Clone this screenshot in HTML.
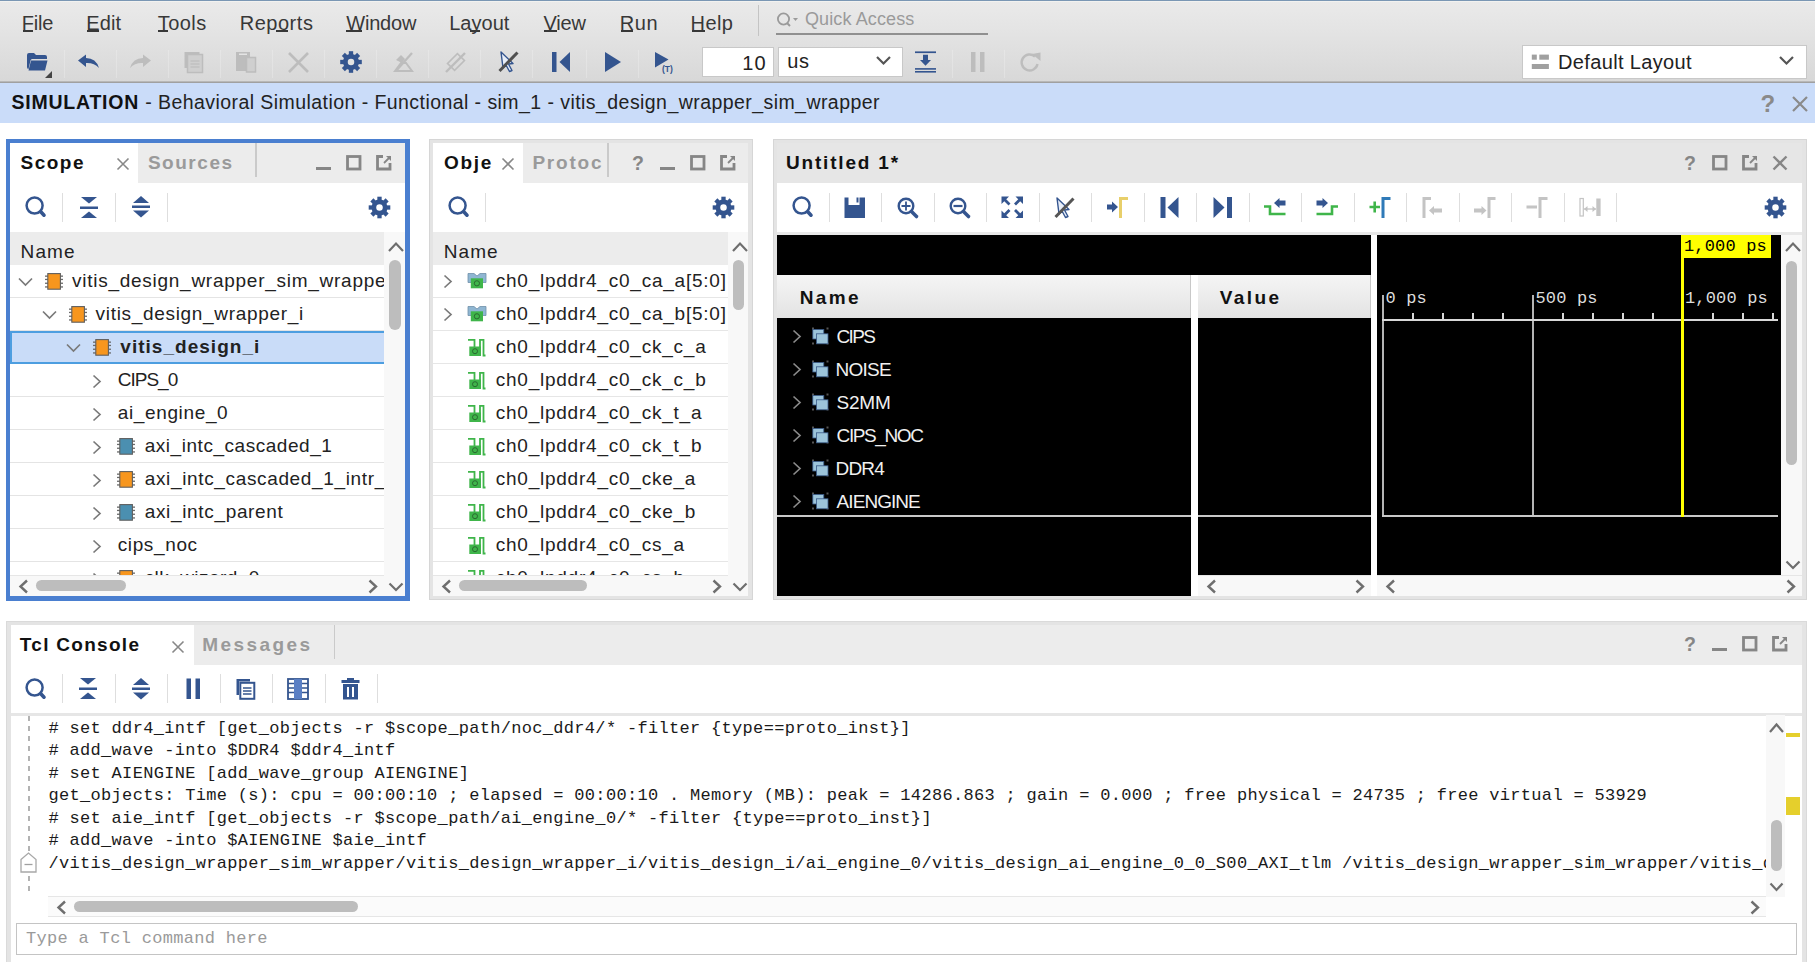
<!DOCTYPE html><html><head><meta charset="utf-8"><style>
html,body{margin:0;padding:0;}
body{width:1815px;height:962px;overflow:hidden;position:relative;background:#fff;font-family:"Liberation Sans",sans-serif;}
.a{position:absolute;}
.t{white-space:nowrap;}
svg{display:block;overflow:visible;}
</style></head><body>
<div class="a" style="left:0px;top:0px;width:1815px;height:82px;background:linear-gradient(#eaeaea 0px,#e4e4e4 30px,#d8d8d8 81px);"></div>
<div class="a" style="left:0px;top:0px;width:1815px;height:1px;background:#7a97b4;"></div>
<div class="a" style="left:0px;top:1px;width:1815px;height:1px;background:#f2f2f0;"></div>
<div class="a" style="left:0px;top:80.5px;width:1815px;height:1px;background:#b8b8b8;"></div>
<div class="a" style="left:0px;top:81.5px;width:1815px;height:1.5px;background:#a0a0a0;"></div>
<div class="a t" style="left:21.80px;top:12.87px;font-size:20px;line-height:20px;color:#383838;font-weight:normal;letter-spacing:-0.235px;font-family:'Liberation Sans', sans-serif;">File</div>
<div class="a t" style="left:86.30px;top:12.87px;font-size:20px;line-height:20px;color:#383838;font-weight:normal;letter-spacing:0.065px;font-family:'Liberation Sans', sans-serif;">Edit</div>
<div class="a t" style="left:157.70px;top:12.87px;font-size:20px;line-height:20px;color:#383838;font-weight:normal;letter-spacing:0.478px;font-family:'Liberation Sans', sans-serif;">Tools</div>
<div class="a t" style="left:239.70px;top:12.87px;font-size:20px;line-height:20px;color:#383838;font-weight:normal;letter-spacing:0.528px;font-family:'Liberation Sans', sans-serif;">Reports</div>
<div class="a t" style="left:346.20px;top:12.87px;font-size:20px;line-height:20px;color:#383838;font-weight:normal;letter-spacing:-0.178px;font-family:'Liberation Sans', sans-serif;">Window</div>
<div class="a t" style="left:449.20px;top:12.87px;font-size:20px;line-height:20px;color:#383838;font-weight:normal;letter-spacing:0.022px;font-family:'Liberation Sans', sans-serif;">Layout</div>
<div class="a t" style="left:543.60px;top:12.87px;font-size:20px;line-height:20px;color:#383838;font-weight:normal;letter-spacing:-0.215px;font-family:'Liberation Sans', sans-serif;">View</div>
<div class="a t" style="left:619.70px;top:12.87px;font-size:20px;line-height:20px;color:#383838;font-weight:normal;letter-spacing:0.567px;font-family:'Liberation Sans', sans-serif;">Run</div>
<div class="a t" style="left:690.60px;top:12.87px;font-size:20px;line-height:20px;color:#383838;font-weight:normal;letter-spacing:0.363px;font-family:'Liberation Sans', sans-serif;">Help</div>
<div class="a" style="left:22.8px;top:30.2px;width:9.900000000000002px;height:1.5px;background:#383838;"></div>
<div class="a" style="left:87.3px;top:30.2px;width:11.299999999999997px;height:1.5px;background:#383838;"></div>
<div class="a" style="left:157.7px;top:30.2px;width:10.0px;height:1.5px;background:#383838;"></div>
<div class="a" style="left:275.8px;top:30.2px;width:11.899999999999977px;height:1.5px;background:#383838;"></div>
<div class="a" style="left:346.2px;top:30.2px;width:16.30000000000001px;height:1.5px;background:#383838;"></div>
<div class="a" style="left:470px;top:30.2px;width:10px;height:1.5px;background:#383838;"></div>
<div class="a" style="left:543.6px;top:30.2px;width:13.399999999999977px;height:1.5px;background:#383838;"></div>
<div class="a" style="left:620.7px;top:30.2px;width:12.0px;height:1.5px;background:#383838;"></div>
<div class="a" style="left:691.6px;top:30.2px;width:13.100000000000023px;height:1.5px;background:#383838;"></div>
<div class="a" style="left:758px;top:5px;width:1px;height:31px;background:#c4c4c4;"></div>
<svg class="a" style="left:776px;top:12px;" width="26" height="16" viewBox="0 0 26 16"><circle cx="7.5" cy="7" r="5.6" fill="none" stroke="#9a9a9a" stroke-width="1.8"/><line x1="11" y1="11" x2="14" y2="14" stroke="#9a9a9a" stroke-width="2"/><path d="M17 6 L22 6 L19.5 9 Z" fill="#9a9a9a"/></svg>
<div class="a t" style="left:805.00px;top:10.16px;font-size:18px;line-height:18px;color:#9a9a9a;font-weight:normal;letter-spacing:0.116px;font-family:'Liberation Sans', sans-serif;">Quick Access</div>
<div class="a" style="left:776px;top:33px;width:212px;height:1.5px;background:#909090;"></div>
<div class="a" style="left:64px;top:50px;width:1px;height:28px;background:rgba(255,255,255,0.22);"></div>
<div class="a" style="left:116px;top:50px;width:1px;height:28px;background:rgba(255,255,255,0.22);"></div>
<div class="a" style="left:168px;top:50px;width:1px;height:28px;background:rgba(255,255,255,0.22);"></div>
<div class="a" style="left:220px;top:50px;width:1px;height:28px;background:rgba(255,255,255,0.22);"></div>
<div class="a" style="left:272px;top:50px;width:1px;height:28px;background:rgba(255,255,255,0.22);"></div>
<div class="a" style="left:324px;top:50px;width:1px;height:28px;background:rgba(255,255,255,0.22);"></div>
<div class="a" style="left:376px;top:50px;width:1px;height:28px;background:rgba(255,255,255,0.22);"></div>
<div class="a" style="left:428px;top:50px;width:1px;height:28px;background:rgba(255,255,255,0.22);"></div>
<div class="a" style="left:480px;top:50px;width:1px;height:28px;background:rgba(255,255,255,0.22);"></div>
<div class="a" style="left:532px;top:50px;width:1px;height:28px;background:rgba(255,255,255,0.22);"></div>
<div class="a" style="left:586px;top:50px;width:1px;height:28px;background:rgba(255,255,255,0.22);"></div>
<div class="a" style="left:638px;top:50px;width:1px;height:28px;background:rgba(255,255,255,0.22);"></div>
<div class="a" style="left:952px;top:50px;width:1px;height:28px;background:rgba(255,255,255,0.22);"></div>
<div class="a" style="left:1004px;top:50px;width:1px;height:28px;background:rgba(255,255,255,0.22);"></div>
<svg class="a" style="left:26px;top:52px;" width="28" height="28" viewBox="0 0 28 28"><path d="M1 3 Q1 1 3 1 L8 1 L10 3 L19 3 Q21 3 21 5 L21 7 L6 7 Q5 7 4.5 8.5 L2.5 17 Q1 17 1 15 Z" fill="#34558f"/><path d="M5 8.5 L21.5 8.5 L19 18.5 L2.5 18.5 Z" fill="#34558f"/><path d="M19 26 L26 19 L26 26 Z" fill="#444"/></svg>
<svg class="a" style="left:77px;top:54px;" width="24" height="16" viewBox="0 0 24 16"><path d="M1 6.5 L9 0.5 L9 4 Q19 4 22 14 Q17 8.5 9 9 L9 13 Z" fill="#34558f"/></svg>
<svg class="a" style="left:129px;top:54px;" width="24" height="16" viewBox="0 0 24 16"><path d="M22 6.5 L14 0.5 L14 4 Q4 4 1 14 Q6 8.5 14 9 L14 13 Z" fill="#bdbdbd"/></svg>
<svg class="a" style="left:184px;top:51px;" width="20" height="22" viewBox="0 0 20 22"><rect x="0.5" y="1" width="15" height="16" fill="#bdbdbd"/><rect x="3.5" y="3.5" width="15" height="18" fill="#cfcfcf" stroke="#bdbdbd" stroke-width="1.5"/><line x1="6.5" y1="10" x2="15.5" y2="10" stroke="#bdbdbd" stroke-width="1.2"/><line x1="6.5" y1="13" x2="15.5" y2="13" stroke="#bdbdbd" stroke-width="1.2"/><line x1="6.5" y1="16" x2="15.5" y2="16" stroke="#bdbdbd" stroke-width="1.2"/></svg>
<svg class="a" style="left:236px;top:51px;" width="22" height="22" viewBox="0 0 22 22"><rect x="0" y="1" width="14" height="19" fill="#bdbdbd"/><rect x="3" y="2.5" width="8" height="1.5" fill="#e4e4e4"/><rect x="10.5" y="6.5" width="9" height="14.5" fill="#cfcfcf" stroke="#bdbdbd" stroke-width="1.5"/></svg>
<svg class="a" style="left:287px;top:51px;" width="23" height="23" viewBox="0 0 23 23"><path d="M2 2 L21 21 M21 2 L2 21" stroke="#bdbdbd" stroke-width="2.6"/></svg>
<svg class="a" style="left:0px;top:0px;" width="1" height="1" viewBox="0 0 1 1"></svg>
<svg class="a" style="left:340px;top:51px;" width="22" height="22" viewBox="0 0 22 22"><circle cx="11" cy="11" r="7.99" fill="#34558f"/><rect x="8.84" y="0.20" width="4.32" height="10.80" fill="#34558f" transform="rotate(0 11 11)"/><rect x="8.84" y="0.20" width="4.32" height="10.80" fill="#34558f" transform="rotate(45 11 11)"/><rect x="8.84" y="0.20" width="4.32" height="10.80" fill="#34558f" transform="rotate(90 11 11)"/><rect x="8.84" y="0.20" width="4.32" height="10.80" fill="#34558f" transform="rotate(135 11 11)"/><rect x="8.84" y="0.20" width="4.32" height="10.80" fill="#34558f" transform="rotate(180 11 11)"/><rect x="8.84" y="0.20" width="4.32" height="10.80" fill="#34558f" transform="rotate(225 11 11)"/><rect x="8.84" y="0.20" width="4.32" height="10.80" fill="#34558f" transform="rotate(270 11 11)"/><rect x="8.84" y="0.20" width="4.32" height="10.80" fill="#34558f" transform="rotate(315 11 11)"/><circle cx="11" cy="11" r="3.24" fill="#e3e3e3"/></svg>
<svg class="a" style="left:393px;top:51px;" width="22" height="22" viewBox="0 0 22 22"><path d="M3 9 L8 4 L12 8 L9 12 Z" fill="#bdbdbd"/><path d="M2 20 L8 12 L13 12 L19 20 Z" fill="none" stroke="#bdbdbd" stroke-width="2"/><line x1="3" y1="20" x2="19" y2="2" stroke="#bdbdbd" stroke-width="2.2"/></svg>
<svg class="a" style="left:445px;top:51px;" width="22" height="22" viewBox="0 0 22 22"><rect x="4" y="6" width="14" height="10" transform="rotate(-45 11 11)" fill="none" stroke="#bdbdbd" stroke-width="1.6"/><line x1="1" y1="21" x2="20" y2="2" stroke="#bdbdbd" stroke-width="2.4"/></svg>
<svg class="a" style="left:498px;top:51px;" width="22" height="22" viewBox="0 0 22 22"><path d="M3 1 L15 12.5 L10.5 13 L14 19.5 L11.5 20.5 L8 14 L5 17 Z" fill="#e8eef8" stroke="#34558f" stroke-width="1.4" stroke-linejoin="round"/><line x1="1.5" y1="20" x2="19.5" y2="1.5" stroke="#505050" stroke-width="3"/></svg>
<svg class="a" style="left:552px;top:51px;" width="20" height="22" viewBox="0 0 20 22"><rect x="0" y="1" width="4.5" height="20" fill="#34558f"/><path d="M18 1 L7.5 11 L18 21 Z" fill="#34558f"/></svg>
<svg class="a" style="left:604px;top:51px;" width="20" height="22" viewBox="0 0 20 22"><path d="M1 1 L17 11 L1 21 Z" fill="#34558f"/></svg>
<svg class="a" style="left:655px;top:51px;" width="24" height="22" viewBox="0 0 24 22"><path d="M0 1 L13.5 8.5 L0 16.5 Z" fill="#34558f"/><text x="7" y="20.5" font-family="Liberation Sans" font-size="8.5" font-weight="bold" fill="#34558f">(T)</text></svg>
<div class="a" style="left:702px;top:47px;width:72px;height:30px;background:#fff;box-sizing:border-box;border:1px solid #c8c8c8;"></div>
<div class="a t" style="left:742.20px;top:53.37px;font-size:20px;line-height:20px;color:#222;font-weight:normal;letter-spacing:1.077px;font-family:'Liberation Sans', sans-serif;">10</div>
<div class="a" style="left:778px;top:47px;width:125px;height:30px;background:#fff;box-sizing:border-box;border:1px solid #c8c8c8;"></div>
<div class="a t" style="left:787.20px;top:51.37px;font-size:20px;line-height:20px;color:#222;font-weight:normal;letter-spacing:0.677px;font-family:'Liberation Sans', sans-serif;">us</div>
<svg class="a" style="left:875px;top:55px;" width="18" height="12" viewBox="0 0 18 12"><path d="M2 2 L8.5 8.5 L15 2" fill="none" stroke="#555" stroke-width="2.2"/></svg>
<svg class="a" style="left:914px;top:50px;" width="23" height="24" viewBox="0 0 23 24"><rect x="1" y="1.4" width="21" height="1.7" fill="#34558f"/><path d="M9 4.8 L14 4.8 L14 10 L17 10 L11.5 15.7 L6 10 L9 10 Z" fill="#34558f"/><rect x="1" y="18.1" width="21" height="1.6" fill="#34558f"/><rect x="1" y="21" width="21" height="1.6" fill="#34558f"/></svg>
<svg class="a" style="left:970px;top:51px;" width="16" height="22" viewBox="0 0 16 22"><rect x="1" y="1" width="4.5" height="20" fill="#bdbdbd"/><rect x="10" y="1" width="4.5" height="20" fill="#bdbdbd"/></svg>
<svg class="a" style="left:1019px;top:51px;" width="23" height="23" viewBox="0 0 23 23"><path d="M18.5 13 A8 8 0 1 1 16 5.5" fill="none" stroke="#bdbdbd" stroke-width="2.4"/><path d="M13 3 L21.5 1.5 L21.5 10 Z" fill="#bdbdbd"/></svg>
<div class="a" style="left:1522px;top:45px;width:285px;height:34px;background:#fff;box-sizing:border-box;border:1px solid #c8c8c8;"></div>
<svg class="a" style="left:1531px;top:54px;" width="19" height="17" viewBox="0 0 19 17"><rect x="0.8" y="0.6" width="5" height="5.1" fill="#a0a0a0"/><rect x="8.3" y="0.6" width="9.6" height="5.1" fill="#a0a0a0"/><rect x="0.8" y="10" width="17.1" height="5" fill="#a0a0a0"/></svg>
<div class="a t" style="left:1558.00px;top:52.17px;font-size:20px;line-height:20px;color:#222;font-weight:normal;letter-spacing:0.352px;font-family:'Liberation Sans', sans-serif;">Default Layout</div>
<svg class="a" style="left:1778px;top:55px;" width="18" height="12" viewBox="0 0 18 12"><path d="M2 2 L8.5 8.5 L15 2" fill="none" stroke="#555" stroke-width="2.2"/></svg>
<div class="a" style="left:0px;top:83px;width:1815px;height:40px;background:#cadcf9;"></div>
<div class="a t" style="left:11.60px;top:92.59px;font-size:19.5px;line-height:19.5px;color:#111;font-weight:bold;letter-spacing:0.756px;font-family:'Liberation Sans', sans-serif;">SIMULATION</div>
<div class="a t" style="left:145.20px;top:92.59px;font-size:19.5px;line-height:19.5px;color:#222;font-weight:normal;letter-spacing:0.438px;font-family:'Liberation Sans', sans-serif;">- Behavioral Simulation - Functional - sim_1 - vitis_design_wrapper_sim_wrapper</div>
<div class="a t" style="left:1760.50px;top:92.28px;font-size:24px;line-height:24px;color:#8a8a8a;font-weight:bold;letter-spacing:3.500px;font-family:'Liberation Sans', sans-serif;">?</div>
<svg class="a" style="left:1791px;top:95px;" width="18" height="18" viewBox="0 0 18 18"><path d="M2 2 L16 16 M16 2 L2 16" stroke="#8a8a8a" stroke-width="2.2"/></svg>
<div class="a" style="left:6px;top:139px;width:404px;height:462px;background:#4a7fd0;"></div>
<div class="a" style="left:10px;top:143px;width:395px;height:453px;background:#fff;"></div>
<div class="a" style="left:138px;top:143px;width:267px;height:40px;background:#ececec;"></div>
<div class="a" style="left:10px;top:143px;width:128px;height:40px;background:#fff;"></div>
<div class="a t" style="left:20.50px;top:152.82px;font-size:19px;line-height:19px;color:#111;font-weight:bold;letter-spacing:1.487px;font-family:'Liberation Sans', sans-serif;">Scope</div>
<svg class="a" style="left:116px;top:157px;" width="14" height="14" viewBox="0 0 14 14"><path d="M1.5 1.5 L12.5 12.5 M12.5 1.5 L1.5 12.5" stroke="#888" stroke-width="1.6"/></svg>
<div class="a t" style="left:147.90px;top:152.82px;font-size:19px;line-height:19px;color:#9a9a9a;font-weight:bold;letter-spacing:1.531px;font-family:'Liberation Sans', sans-serif;">Sources</div>
<div class="a" style="left:255px;top:143px;width:1.5px;height:34px;background:#cacaca;"></div>
<div class="a" style="left:316px;top:167px;width:15px;height:3px;background:#868686;"></div>
<svg class="a" style="left:346px;top:155px;" width="16" height="16" viewBox="0 0 16 16"><rect x="1.5" y="1.5" width="12.5" height="12.5" fill="none" stroke="#868686" stroke-width="2.8"/></svg>
<svg class="a" style="left:376px;top:155px;" width="16" height="16" viewBox="0 0 16 16"><path d="M7 1.5 L1.5 1.5 L1.5 14 L14 14 L14 8" fill="none" stroke="#868686" stroke-width="2.8"/><path d="M8 8 L14.5 1.5" stroke="#868686" stroke-width="1.8"/><path d="M10 1 L15 1 L15 6 Z" fill="#868686"/></svg>
<svg class="a" style="left:25px;top:196px;" width="22" height="22" viewBox="0 0 22 22"><circle cx="9.6" cy="9.6" r="8" fill="none" stroke="#34558f" stroke-width="2.5"/><line x1="15.8" y1="15.8" x2="19" y2="19.2" stroke="#34558f" stroke-width="3.6" stroke-linecap="round"/></svg>
<div class="a" style="left:62px;top:193px;width:1px;height:29px;background:#dedede;"></div>
<svg class="a" style="left:80px;top:197px;" width="18" height="22" viewBox="0 0 18 22"><path d="M1 0 L17 0 L9 6.5 Z" fill="#34558f"/><rect x="0" y="9.5" width="18" height="2.5" fill="#34558f"/><path d="M1 21 L17 21 L9 14.5 Z" fill="#34558f"/></svg>
<div class="a" style="left:115px;top:193px;width:1px;height:29px;background:#dedede;"></div>
<svg class="a" style="left:132px;top:196px;" width="18" height="22" viewBox="0 0 18 22"><path d="M1 7 L17 7 L9 0 Z" fill="#34558f"/><rect x="0" y="9.5" width="18" height="2.5" fill="#34558f"/><path d="M1 14.5 L17 14.5 L9 21.5 Z" fill="#34558f"/></svg>
<div class="a" style="left:167px;top:193px;width:1px;height:29px;background:#dedede;"></div>
<svg class="a" style="left:368px;top:196px;" width="24" height="24" viewBox="0 0 24 24"><circle cx="11.5" cy="11.5" r="7.99" fill="#34558f"/><rect x="9.34" y="0.70" width="4.32" height="10.80" fill="#34558f" transform="rotate(0 11.5 11.5)"/><rect x="9.34" y="0.70" width="4.32" height="10.80" fill="#34558f" transform="rotate(45 11.5 11.5)"/><rect x="9.34" y="0.70" width="4.32" height="10.80" fill="#34558f" transform="rotate(90 11.5 11.5)"/><rect x="9.34" y="0.70" width="4.32" height="10.80" fill="#34558f" transform="rotate(135 11.5 11.5)"/><rect x="9.34" y="0.70" width="4.32" height="10.80" fill="#34558f" transform="rotate(180 11.5 11.5)"/><rect x="9.34" y="0.70" width="4.32" height="10.80" fill="#34558f" transform="rotate(225 11.5 11.5)"/><rect x="9.34" y="0.70" width="4.32" height="10.80" fill="#34558f" transform="rotate(270 11.5 11.5)"/><rect x="9.34" y="0.70" width="4.32" height="10.80" fill="#34558f" transform="rotate(315 11.5 11.5)"/><circle cx="11.5" cy="11.5" r="3.24" fill="#fff"/></svg>
<div class="a" style="left:10px;top:232px;width:374px;height:33px;background:#ececec;"></div>
<div class="a t" style="left:20.60px;top:242.02px;font-size:19px;line-height:19px;color:#222;font-weight:normal;letter-spacing:1.095px;font-family:'Liberation Sans', sans-serif;">Name</div>
<div class="a" style="left:384px;top:232px;width:21px;height:343px;background:#f8f8f8;"></div>
<svg class="a" style="left:388px;top:242px;" width="16" height="11" viewBox="0 0 16 11"><path d="M1 9 L8.0 1.5 L15 9" fill="none" stroke="#6e6e6e" stroke-width="2.2"/></svg>
<div class="a" style="left:389px;top:260px;width:11.5px;height:70px;background:#bdbdbd;border-radius:6px;"></div>
<div class="a" style="left:10px;top:265px;width:374px;height:310px;overflow:hidden;">
<div class="a" style="left:0;top:32px;width:374px;height:1px;background:#e4e4e4;"></div>
<svg class="a" style="left:8.0px;top:12px" width="15" height="10" viewBox="0 0 15 10"><path d="M1 1.5 L7.5 8 L14 1.5" fill="none" stroke="#7a7a7a" stroke-width="1.7"/></svg>
<svg class="a" style="left:35px;top:8px" width="18" height="17" viewBox="0 0 18 17"><rect x="0" y="2.5" width="3" height="1.3" fill="#6a6a6a"/><rect x="15" y="2.5" width="3" height="1.3" fill="#6a6a6a"/><rect x="0" y="5.8" width="3" height="1.3" fill="#6a6a6a"/><rect x="15" y="5.8" width="3" height="1.3" fill="#6a6a6a"/><rect x="0" y="9.6" width="3" height="1.3" fill="#6a6a6a"/><rect x="15" y="9.6" width="3" height="1.3" fill="#6a6a6a"/><rect x="0" y="13.3" width="3" height="1.3" fill="#6a6a6a"/><rect x="15" y="13.3" width="3" height="1.3" fill="#6a6a6a"/><rect x="2.8" y="0.6" width="12.6" height="15.6" fill="#f7961e" stroke="#5f5f5f" stroke-width="1.1"/></svg>
<div class="a t" style="left:62.00px;top:6.12px;font-size:19px;line-height:19px;color:#222;font-weight:normal;letter-spacing:0.736px;">vitis_design_wrapper_sim_wrappe</div>
<div class="a" style="left:0;top:65px;width:374px;height:1px;background:#e4e4e4;"></div>
<svg class="a" style="left:32.0px;top:45px" width="15" height="10" viewBox="0 0 15 10"><path d="M1 1.5 L7.5 8 L14 1.5" fill="none" stroke="#7a7a7a" stroke-width="1.7"/></svg>
<svg class="a" style="left:59px;top:41px" width="18" height="17" viewBox="0 0 18 17"><rect x="0" y="2.5" width="3" height="1.3" fill="#6a6a6a"/><rect x="15" y="2.5" width="3" height="1.3" fill="#6a6a6a"/><rect x="0" y="5.8" width="3" height="1.3" fill="#6a6a6a"/><rect x="15" y="5.8" width="3" height="1.3" fill="#6a6a6a"/><rect x="0" y="9.6" width="3" height="1.3" fill="#6a6a6a"/><rect x="15" y="9.6" width="3" height="1.3" fill="#6a6a6a"/><rect x="0" y="13.3" width="3" height="1.3" fill="#6a6a6a"/><rect x="15" y="13.3" width="3" height="1.3" fill="#6a6a6a"/><rect x="2.8" y="0.6" width="12.6" height="15.6" fill="#f7961e" stroke="#5f5f5f" stroke-width="1.1"/></svg>
<div class="a t" style="left:85.60px;top:39.12px;font-size:19px;line-height:19px;color:#222;font-weight:normal;letter-spacing:0.683px;">vitis_design_wrapper_i</div>
<div class="a" style="left:0;top:66px;width:374px;height:33px;background:#c9dcf8;box-sizing:border-box;border-top:2px solid #4d9ee0;border-bottom:2px solid #4d9ee0;"></div>
<svg class="a" style="left:56.0px;top:78px" width="15" height="10" viewBox="0 0 15 10"><path d="M1 1.5 L7.5 8 L14 1.5" fill="none" stroke="#7a7a7a" stroke-width="1.7"/></svg>
<svg class="a" style="left:83px;top:74px" width="18" height="17" viewBox="0 0 18 17"><rect x="0" y="2.5" width="3" height="1.3" fill="#6a6a6a"/><rect x="15" y="2.5" width="3" height="1.3" fill="#6a6a6a"/><rect x="0" y="5.8" width="3" height="1.3" fill="#6a6a6a"/><rect x="15" y="5.8" width="3" height="1.3" fill="#6a6a6a"/><rect x="0" y="9.6" width="3" height="1.3" fill="#6a6a6a"/><rect x="15" y="9.6" width="3" height="1.3" fill="#6a6a6a"/><rect x="0" y="13.3" width="3" height="1.3" fill="#6a6a6a"/><rect x="15" y="13.3" width="3" height="1.3" fill="#6a6a6a"/><rect x="2.8" y="0.6" width="12.6" height="15.6" fill="#f7961e" stroke="#5f5f5f" stroke-width="1.1"/></svg>
<div class="a t" style="left:110.30px;top:72.12px;font-size:19px;line-height:19px;color:#222;font-weight:bold;letter-spacing:1.024px;">vitis_design_i</div>
<div class="a" style="left:0;top:131px;width:374px;height:1px;background:#e4e4e4;"></div>
<svg class="a" style="left:82.3px;top:109px" width="10" height="15" viewBox="0 0 10 15"><path d="M1.5 1.5 L8 7.5 L1.5 13.5" fill="none" stroke="#7a7a7a" stroke-width="1.7"/></svg>
<div class="a t" style="left:107.70px;top:105.12px;font-size:19px;line-height:19px;color:#222;font-weight:normal;letter-spacing:-0.983px;">CIPS_0</div>
<div class="a" style="left:0;top:164px;width:374px;height:1px;background:#e4e4e4;"></div>
<svg class="a" style="left:82.3px;top:142px" width="10" height="15" viewBox="0 0 10 15"><path d="M1.5 1.5 L8 7.5 L1.5 13.5" fill="none" stroke="#7a7a7a" stroke-width="1.7"/></svg>
<div class="a t" style="left:107.70px;top:138.12px;font-size:19px;line-height:19px;color:#222;font-weight:normal;letter-spacing:0.642px;">ai_engine_0</div>
<div class="a" style="left:0;top:197px;width:374px;height:1px;background:#e4e4e4;"></div>
<svg class="a" style="left:82.3px;top:175px" width="10" height="15" viewBox="0 0 10 15"><path d="M1.5 1.5 L8 7.5 L1.5 13.5" fill="none" stroke="#7a7a7a" stroke-width="1.7"/></svg>
<svg class="a" style="left:107px;top:173px" width="18" height="17" viewBox="0 0 18 17"><rect x="0" y="2.5" width="3" height="1.3" fill="#6a6a6a"/><rect x="15" y="2.5" width="3" height="1.3" fill="#6a6a6a"/><rect x="0" y="5.8" width="3" height="1.3" fill="#6a6a6a"/><rect x="15" y="5.8" width="3" height="1.3" fill="#6a6a6a"/><rect x="0" y="9.6" width="3" height="1.3" fill="#6a6a6a"/><rect x="15" y="9.6" width="3" height="1.3" fill="#6a6a6a"/><rect x="0" y="13.3" width="3" height="1.3" fill="#6a6a6a"/><rect x="15" y="13.3" width="3" height="1.3" fill="#6a6a6a"/><rect x="2.8" y="0.6" width="12.6" height="15.6" fill="#4b8fb0" stroke="#5f5f5f" stroke-width="1.1"/></svg>
<div class="a t" style="left:134.70px;top:171.12px;font-size:19px;line-height:19px;color:#222;font-weight:normal;letter-spacing:0.539px;">axi_intc_cascaded_1</div>
<div class="a" style="left:0;top:230px;width:374px;height:1px;background:#e4e4e4;"></div>
<svg class="a" style="left:82.3px;top:208px" width="10" height="15" viewBox="0 0 10 15"><path d="M1.5 1.5 L8 7.5 L1.5 13.5" fill="none" stroke="#7a7a7a" stroke-width="1.7"/></svg>
<svg class="a" style="left:107px;top:206px" width="18" height="17" viewBox="0 0 18 17"><rect x="0" y="2.5" width="3" height="1.3" fill="#6a6a6a"/><rect x="15" y="2.5" width="3" height="1.3" fill="#6a6a6a"/><rect x="0" y="5.8" width="3" height="1.3" fill="#6a6a6a"/><rect x="15" y="5.8" width="3" height="1.3" fill="#6a6a6a"/><rect x="0" y="9.6" width="3" height="1.3" fill="#6a6a6a"/><rect x="15" y="9.6" width="3" height="1.3" fill="#6a6a6a"/><rect x="0" y="13.3" width="3" height="1.3" fill="#6a6a6a"/><rect x="15" y="13.3" width="3" height="1.3" fill="#6a6a6a"/><rect x="2.8" y="0.6" width="12.6" height="15.6" fill="#f7961e" stroke="#5f5f5f" stroke-width="1.1"/></svg>
<div class="a t" style="left:134.70px;top:204.12px;font-size:19px;line-height:19px;color:#222;font-weight:normal;letter-spacing:0.649px;">axi_intc_cascaded_1_intr_</div>
<div class="a" style="left:0;top:263px;width:374px;height:1px;background:#e4e4e4;"></div>
<svg class="a" style="left:82.3px;top:241px" width="10" height="15" viewBox="0 0 10 15"><path d="M1.5 1.5 L8 7.5 L1.5 13.5" fill="none" stroke="#7a7a7a" stroke-width="1.7"/></svg>
<svg class="a" style="left:107px;top:239px" width="18" height="17" viewBox="0 0 18 17"><rect x="0" y="2.5" width="3" height="1.3" fill="#6a6a6a"/><rect x="15" y="2.5" width="3" height="1.3" fill="#6a6a6a"/><rect x="0" y="5.8" width="3" height="1.3" fill="#6a6a6a"/><rect x="15" y="5.8" width="3" height="1.3" fill="#6a6a6a"/><rect x="0" y="9.6" width="3" height="1.3" fill="#6a6a6a"/><rect x="15" y="9.6" width="3" height="1.3" fill="#6a6a6a"/><rect x="0" y="13.3" width="3" height="1.3" fill="#6a6a6a"/><rect x="15" y="13.3" width="3" height="1.3" fill="#6a6a6a"/><rect x="2.8" y="0.6" width="12.6" height="15.6" fill="#4b8fb0" stroke="#5f5f5f" stroke-width="1.1"/></svg>
<div class="a t" style="left:134.70px;top:237.12px;font-size:19px;line-height:19px;color:#222;font-weight:normal;letter-spacing:0.665px;">axi_intc_parent</div>
<div class="a" style="left:0;top:296px;width:374px;height:1px;background:#e4e4e4;"></div>
<svg class="a" style="left:82.3px;top:274px" width="10" height="15" viewBox="0 0 10 15"><path d="M1.5 1.5 L8 7.5 L1.5 13.5" fill="none" stroke="#7a7a7a" stroke-width="1.7"/></svg>
<div class="a t" style="left:107.70px;top:270.12px;font-size:19px;line-height:19px;color:#222;font-weight:normal;letter-spacing:0.630px;">cips_noc</div>
<div class="a" style="left:0;top:329px;width:374px;height:1px;background:#e4e4e4;"></div>
<svg class="a" style="left:82.3px;top:307px" width="10" height="15" viewBox="0 0 10 15"><path d="M1.5 1.5 L8 7.5 L1.5 13.5" fill="none" stroke="#7a7a7a" stroke-width="1.7"/></svg>
<svg class="a" style="left:107px;top:305px" width="18" height="17" viewBox="0 0 18 17"><rect x="0" y="2.5" width="3" height="1.3" fill="#6a6a6a"/><rect x="15" y="2.5" width="3" height="1.3" fill="#6a6a6a"/><rect x="0" y="5.8" width="3" height="1.3" fill="#6a6a6a"/><rect x="15" y="5.8" width="3" height="1.3" fill="#6a6a6a"/><rect x="0" y="9.6" width="3" height="1.3" fill="#6a6a6a"/><rect x="15" y="9.6" width="3" height="1.3" fill="#6a6a6a"/><rect x="0" y="13.3" width="3" height="1.3" fill="#6a6a6a"/><rect x="15" y="13.3" width="3" height="1.3" fill="#6a6a6a"/><rect x="2.8" y="0.6" width="12.6" height="15.6" fill="#f7961e" stroke="#5f5f5f" stroke-width="1.1"/></svg>
<div class="a t" style="left:134.70px;top:303.12px;font-size:19px;line-height:19px;color:#222;font-weight:normal;letter-spacing:0.431px;">clk_wizard_0</div>
</div>
<div class="a" style="left:10px;top:331px;width:1.5px;height:33px;background:#4d9ee0;"></div>
<div class="a" style="left:10px;top:575px;width:374px;height:21px;background:#f8f8f8;"></div>
<div class="a" style="left:10px;top:575px;width:374px;height:1px;background:#e6e6e6;"></div>
<svg class="a" style="left:18px;top:579px;" width="12" height="16" viewBox="0 0 12 16"><path d="M9 1.5 L2.5 7.5 L9 13.5" fill="none" stroke="#6e6e6e" stroke-width="2.4"/></svg>
<svg class="a" style="left:367px;top:579px;" width="12" height="16" viewBox="0 0 12 16"><path d="M2.5 1.5 L9 7.5 L2.5 13.5" fill="none" stroke="#6e6e6e" stroke-width="2.4"/></svg>
<div class="a" style="left:36px;top:580px;width:90px;height:11px;background:#bdbdbd;border-radius:6px;"></div>
<div class="a" style="left:384px;top:575px;width:21px;height:21px;background:#f8f8f8;"></div>
<svg class="a" style="left:388px;top:582px;" width="16" height="11" viewBox="0 0 16 11"><path d="M1.5 1.5 L8 8 L14.5 1.5" fill="none" stroke="#6e6e6e" stroke-width="2.2"/></svg>
<div class="a" style="left:429px;top:139px;width:324px;height:461px;background:#d6d6d6;"></div>
<div class="a" style="left:430px;top:140px;width:322px;height:459px;background:#e4e4e4;"></div>
<div class="a" style="left:433px;top:143px;width:315px;height:453px;background:#fff;"></div>
<div class="a" style="left:523px;top:143px;width:225px;height:40px;background:#ececec;"></div>
<div class="a t" style="left:443.90px;top:152.82px;font-size:19px;line-height:19px;color:#111;font-weight:bold;letter-spacing:1.712px;font-family:'Liberation Sans', sans-serif;">Obje</div>
<svg class="a" style="left:501px;top:157px;" width="14" height="14" viewBox="0 0 14 14"><path d="M1.5 1.5 L12.5 12.5 M12.5 1.5 L1.5 12.5" stroke="#888" stroke-width="1.6"/></svg>
<div class="a t" style="left:532.40px;top:152.82px;font-size:19px;line-height:19px;color:#9a9a9a;font-weight:bold;letter-spacing:1.799px;font-family:'Liberation Sans', sans-serif;">Protoc</div>
<div class="a" style="left:523px;top:143px;width:84px;height:40px;overflow:hidden;"></div>
<div class="a" style="left:607px;top:143px;width:1.5px;height:34px;background:#cacaca;"></div>
<div class="a t" style="left:632.00px;top:154.09px;font-size:19.5px;line-height:19.5px;color:#868686;font-weight:bold;letter-spacing:1.500px;font-family:'Liberation Sans', sans-serif;">?</div>
<div class="a" style="left:660px;top:167px;width:15px;height:3px;background:#868686;"></div>
<svg class="a" style="left:690px;top:155px;" width="16" height="16" viewBox="0 0 16 16"><rect x="1.5" y="1.5" width="12.5" height="12.5" fill="none" stroke="#868686" stroke-width="2.8"/></svg>
<svg class="a" style="left:720px;top:155px;" width="16" height="16" viewBox="0 0 16 16"><path d="M7 1.5 L1.5 1.5 L1.5 14 L14 14 L14 8" fill="none" stroke="#868686" stroke-width="2.8"/><path d="M8 8 L14.5 1.5" stroke="#868686" stroke-width="1.8"/><path d="M10 1 L15 1 L15 6 Z" fill="#868686"/></svg>
<svg class="a" style="left:448px;top:196px;" width="22" height="22" viewBox="0 0 22 22"><circle cx="9.6" cy="9.6" r="8" fill="none" stroke="#34558f" stroke-width="2.5"/><line x1="15.8" y1="15.8" x2="19" y2="19.2" stroke="#34558f" stroke-width="3.6" stroke-linecap="round"/></svg>
<div class="a" style="left:485px;top:193px;width:1px;height:29px;background:#dedede;"></div>
<svg class="a" style="left:712px;top:196px;" width="24" height="24" viewBox="0 0 24 24"><circle cx="11.5" cy="11.5" r="7.99" fill="#34558f"/><rect x="9.34" y="0.70" width="4.32" height="10.80" fill="#34558f" transform="rotate(0 11.5 11.5)"/><rect x="9.34" y="0.70" width="4.32" height="10.80" fill="#34558f" transform="rotate(45 11.5 11.5)"/><rect x="9.34" y="0.70" width="4.32" height="10.80" fill="#34558f" transform="rotate(90 11.5 11.5)"/><rect x="9.34" y="0.70" width="4.32" height="10.80" fill="#34558f" transform="rotate(135 11.5 11.5)"/><rect x="9.34" y="0.70" width="4.32" height="10.80" fill="#34558f" transform="rotate(180 11.5 11.5)"/><rect x="9.34" y="0.70" width="4.32" height="10.80" fill="#34558f" transform="rotate(225 11.5 11.5)"/><rect x="9.34" y="0.70" width="4.32" height="10.80" fill="#34558f" transform="rotate(270 11.5 11.5)"/><rect x="9.34" y="0.70" width="4.32" height="10.80" fill="#34558f" transform="rotate(315 11.5 11.5)"/><circle cx="11.5" cy="11.5" r="3.24" fill="#fff"/></svg>
<div class="a" style="left:433px;top:232px;width:295px;height:33px;background:#ececec;"></div>
<div class="a t" style="left:443.70px;top:242.02px;font-size:19px;line-height:19px;color:#222;font-weight:normal;letter-spacing:1.095px;font-family:'Liberation Sans', sans-serif;">Name</div>
<div class="a" style="left:727.5px;top:232px;width:20.5px;height:343px;background:#f8f8f8;"></div>
<svg class="a" style="left:732px;top:242px;" width="16" height="11" viewBox="0 0 16 11"><path d="M1 9 L8.0 1.5 L15 9" fill="none" stroke="#6e6e6e" stroke-width="2.2"/></svg>
<div class="a" style="left:732.5px;top:260px;width:11.5px;height:50px;background:#bdbdbd;border-radius:6px;"></div>
<div class="a" style="left:433px;top:265px;width:294.5px;height:310px;overflow:hidden;">
<div class="a" style="left:0;top:32px;width:295px;height:1px;background:#e6e6e6;"></div>
<svg class="a" style="left:10px;top:9px" width="10" height="15" viewBox="0 0 10 15"><path d="M1.5 1.5 L8 7.5 L1.5 13.5" fill="none" stroke="#7a7a7a" stroke-width="1.7"/></svg>
<svg class="a" style="left:35px;top:8px" width="18" height="16" viewBox="0 0 18 16"><path d="M0 0.5 L6 0.5 L9 3 L12 0.5 L18 0.5 L18 9.5 L0 9.5 Z" fill="#8fb6d2" stroke="#6f8fa8" stroke-width="0.8"/><rect x="2.8" y="5.3" width="12.2" height="10" fill="#3fb54a"/><circle cx="8.9" cy="10.3" r="2.6" fill="none" stroke="#2a6a30" stroke-width="1"/></svg>
<div class="a t" style="left:62.70px;top:6.12px;font-size:19px;line-height:19px;color:#222;letter-spacing:0.768px;">ch0_lpddr4_c0_ca_a[5:0]</div>
<div class="a" style="left:0;top:65px;width:295px;height:1px;background:#e6e6e6;"></div>
<svg class="a" style="left:10px;top:42px" width="10" height="15" viewBox="0 0 10 15"><path d="M1.5 1.5 L8 7.5 L1.5 13.5" fill="none" stroke="#7a7a7a" stroke-width="1.7"/></svg>
<svg class="a" style="left:35px;top:41px" width="18" height="16" viewBox="0 0 18 16"><path d="M0 0.5 L6 0.5 L9 3 L12 0.5 L18 0.5 L18 9.5 L0 9.5 Z" fill="#8fb6d2" stroke="#6f8fa8" stroke-width="0.8"/><rect x="2.8" y="5.3" width="12.2" height="10" fill="#3fb54a"/><circle cx="8.9" cy="10.3" r="2.6" fill="none" stroke="#2a6a30" stroke-width="1"/></svg>
<div class="a t" style="left:62.70px;top:39.12px;font-size:19px;line-height:19px;color:#222;letter-spacing:0.768px;">ch0_lpddr4_c0_ca_b[5:0]</div>
<div class="a" style="left:0;top:98px;width:295px;height:1px;background:#e6e6e6;"></div>
<svg class="a" style="left:35px;top:74px" width="18" height="18" viewBox="0 0 18 18"><path d="M0 0.8 L6.5 0.8 L6.5 9 M12 9 L12 0.8 L15.5 0.8 L15.5 16.5 L17.5 16.5" fill="none" stroke="#3fb54a" stroke-width="1.8"/><rect x="1.3" y="7.5" width="11.7" height="9.5" fill="#3fb54a"/><circle cx="7" cy="12.2" r="2.5" fill="none" stroke="#2a6a30" stroke-width="1"/></svg>
<div class="a t" style="left:62.70px;top:72.12px;font-size:19px;line-height:19px;color:#222;letter-spacing:0.768px;">ch0_lpddr4_c0_ck_c_a</div>
<div class="a" style="left:0;top:131px;width:295px;height:1px;background:#e6e6e6;"></div>
<svg class="a" style="left:35px;top:107px" width="18" height="18" viewBox="0 0 18 18"><path d="M0 0.8 L6.5 0.8 L6.5 9 M12 9 L12 0.8 L15.5 0.8 L15.5 16.5 L17.5 16.5" fill="none" stroke="#3fb54a" stroke-width="1.8"/><rect x="1.3" y="7.5" width="11.7" height="9.5" fill="#3fb54a"/><circle cx="7" cy="12.2" r="2.5" fill="none" stroke="#2a6a30" stroke-width="1"/></svg>
<div class="a t" style="left:62.70px;top:105.12px;font-size:19px;line-height:19px;color:#222;letter-spacing:0.768px;">ch0_lpddr4_c0_ck_c_b</div>
<div class="a" style="left:0;top:164px;width:295px;height:1px;background:#e6e6e6;"></div>
<svg class="a" style="left:35px;top:140px" width="18" height="18" viewBox="0 0 18 18"><path d="M0 0.8 L6.5 0.8 L6.5 9 M12 9 L12 0.8 L15.5 0.8 L15.5 16.5 L17.5 16.5" fill="none" stroke="#3fb54a" stroke-width="1.8"/><rect x="1.3" y="7.5" width="11.7" height="9.5" fill="#3fb54a"/><circle cx="7" cy="12.2" r="2.5" fill="none" stroke="#2a6a30" stroke-width="1"/></svg>
<div class="a t" style="left:62.70px;top:138.12px;font-size:19px;line-height:19px;color:#222;letter-spacing:0.768px;">ch0_lpddr4_c0_ck_t_a</div>
<div class="a" style="left:0;top:197px;width:295px;height:1px;background:#e6e6e6;"></div>
<svg class="a" style="left:35px;top:173px" width="18" height="18" viewBox="0 0 18 18"><path d="M0 0.8 L6.5 0.8 L6.5 9 M12 9 L12 0.8 L15.5 0.8 L15.5 16.5 L17.5 16.5" fill="none" stroke="#3fb54a" stroke-width="1.8"/><rect x="1.3" y="7.5" width="11.7" height="9.5" fill="#3fb54a"/><circle cx="7" cy="12.2" r="2.5" fill="none" stroke="#2a6a30" stroke-width="1"/></svg>
<div class="a t" style="left:62.70px;top:171.12px;font-size:19px;line-height:19px;color:#222;letter-spacing:0.768px;">ch0_lpddr4_c0_ck_t_b</div>
<div class="a" style="left:0;top:230px;width:295px;height:1px;background:#e6e6e6;"></div>
<svg class="a" style="left:35px;top:206px" width="18" height="18" viewBox="0 0 18 18"><path d="M0 0.8 L6.5 0.8 L6.5 9 M12 9 L12 0.8 L15.5 0.8 L15.5 16.5 L17.5 16.5" fill="none" stroke="#3fb54a" stroke-width="1.8"/><rect x="1.3" y="7.5" width="11.7" height="9.5" fill="#3fb54a"/><circle cx="7" cy="12.2" r="2.5" fill="none" stroke="#2a6a30" stroke-width="1"/></svg>
<div class="a t" style="left:62.70px;top:204.12px;font-size:19px;line-height:19px;color:#222;letter-spacing:0.768px;">ch0_lpddr4_c0_cke_a</div>
<div class="a" style="left:0;top:263px;width:295px;height:1px;background:#e6e6e6;"></div>
<svg class="a" style="left:35px;top:239px" width="18" height="18" viewBox="0 0 18 18"><path d="M0 0.8 L6.5 0.8 L6.5 9 M12 9 L12 0.8 L15.5 0.8 L15.5 16.5 L17.5 16.5" fill="none" stroke="#3fb54a" stroke-width="1.8"/><rect x="1.3" y="7.5" width="11.7" height="9.5" fill="#3fb54a"/><circle cx="7" cy="12.2" r="2.5" fill="none" stroke="#2a6a30" stroke-width="1"/></svg>
<div class="a t" style="left:62.70px;top:237.12px;font-size:19px;line-height:19px;color:#222;letter-spacing:0.768px;">ch0_lpddr4_c0_cke_b</div>
<div class="a" style="left:0;top:296px;width:295px;height:1px;background:#e6e6e6;"></div>
<svg class="a" style="left:35px;top:272px" width="18" height="18" viewBox="0 0 18 18"><path d="M0 0.8 L6.5 0.8 L6.5 9 M12 9 L12 0.8 L15.5 0.8 L15.5 16.5 L17.5 16.5" fill="none" stroke="#3fb54a" stroke-width="1.8"/><rect x="1.3" y="7.5" width="11.7" height="9.5" fill="#3fb54a"/><circle cx="7" cy="12.2" r="2.5" fill="none" stroke="#2a6a30" stroke-width="1"/></svg>
<div class="a t" style="left:62.70px;top:270.12px;font-size:19px;line-height:19px;color:#222;letter-spacing:0.768px;">ch0_lpddr4_c0_cs_a</div>
<div class="a" style="left:0;top:329px;width:295px;height:1px;background:#e6e6e6;"></div>
<svg class="a" style="left:35px;top:305px" width="18" height="18" viewBox="0 0 18 18"><path d="M0 0.8 L6.5 0.8 L6.5 9 M12 9 L12 0.8 L15.5 0.8 L15.5 16.5 L17.5 16.5" fill="none" stroke="#3fb54a" stroke-width="1.8"/><rect x="1.3" y="7.5" width="11.7" height="9.5" fill="#3fb54a"/><circle cx="7" cy="12.2" r="2.5" fill="none" stroke="#2a6a30" stroke-width="1"/></svg>
<div class="a t" style="left:62.70px;top:303.12px;font-size:19px;line-height:19px;color:#222;letter-spacing:0.768px;">ch0_lpddr4_c0_cs_b</div>
</div>
<div class="a" style="left:433px;top:575px;width:294.5px;height:21px;background:#f8f8f8;"></div>
<div class="a" style="left:433px;top:575px;width:294.5px;height:1px;background:#e6e6e6;"></div>
<svg class="a" style="left:441px;top:579px;" width="12" height="16" viewBox="0 0 12 16"><path d="M9 1.5 L2.5 7.5 L9 13.5" fill="none" stroke="#6e6e6e" stroke-width="2.4"/></svg>
<svg class="a" style="left:710.5px;top:579px;" width="12" height="16" viewBox="0 0 12 16"><path d="M2.5 1.5 L9 7.5 L2.5 13.5" fill="none" stroke="#6e6e6e" stroke-width="2.4"/></svg>
<div class="a" style="left:459px;top:580px;width:128px;height:11px;background:#bdbdbd;border-radius:6px;"></div>
<div class="a" style="left:727.5px;top:575px;width:20.5px;height:21px;background:#f8f8f8;"></div>
<svg class="a" style="left:731.5px;top:582px;" width="16" height="11" viewBox="0 0 16 11"><path d="M1.5 1.5 L8 8 L14.5 1.5" fill="none" stroke="#6e6e6e" stroke-width="2.2"/></svg>
<div class="a" style="left:773px;top:139px;width:1034px;height:461px;background:#d6d6d6;"></div>
<div class="a" style="left:774px;top:140px;width:1032px;height:459px;background:#e4e4e4;"></div>
<div class="a" style="left:777px;top:143px;width:1025px;height:40px;background:#e6e6e6;"></div>
<div class="a t" style="left:786.00px;top:152.92px;font-size:19px;line-height:19px;color:#111;font-weight:bold;letter-spacing:1.814px;font-family:'Liberation Sans', sans-serif;">Untitled 1*</div>
<div class="a t" style="left:1684.00px;top:154.09px;font-size:19.5px;line-height:19.5px;color:#868686;font-weight:bold;letter-spacing:1.500px;font-family:'Liberation Sans', sans-serif;">?</div>
<svg class="a" style="left:1712px;top:155px;" width="16" height="16" viewBox="0 0 16 16"><rect x="1.5" y="1.5" width="12.5" height="12.5" fill="none" stroke="#868686" stroke-width="2.8"/></svg>
<svg class="a" style="left:1742px;top:155px;" width="16" height="16" viewBox="0 0 16 16"><path d="M7 1.5 L1.5 1.5 L1.5 14 L14 14 L14 8" fill="none" stroke="#868686" stroke-width="2.8"/><path d="M8 8 L14.5 1.5" stroke="#868686" stroke-width="1.8"/><path d="M10 1 L15 1 L15 6 Z" fill="#868686"/></svg>
<svg class="a" style="left:1772px;top:155px;" width="16" height="16" viewBox="0 0 16 16"><path d="M1.5 1.5 L14.5 14.5 M14.5 1.5 L1.5 14.5" stroke="#868686" stroke-width="2.4"/></svg>
<div class="a" style="left:777px;top:183px;width:1025px;height:50px;background:#fff;"></div>
<div class="a" style="left:777px;top:232px;width:1025px;height:2.5px;background:#e8e8e8;"></div>
<svg class="a" style="left:792px;top:196px;" width="22" height="22" viewBox="0 0 22 22"><circle cx="9.6" cy="9.6" r="8" fill="none" stroke="#34558f" stroke-width="2.5"/><line x1="15.8" y1="15.8" x2="19" y2="19.2" stroke="#34558f" stroke-width="3.6" stroke-linecap="round"/></svg>
<div class="a" style="left:828.5px;top:193px;width:1px;height:29px;background:#dedede;"></div>
<div class="a" style="left:881px;top:193px;width:1px;height:29px;background:#dedede;"></div>
<div class="a" style="left:933.5px;top:193px;width:1px;height:29px;background:#dedede;"></div>
<div class="a" style="left:986px;top:193px;width:1px;height:29px;background:#dedede;"></div>
<div class="a" style="left:1038.5px;top:193px;width:1px;height:29px;background:#dedede;"></div>
<div class="a" style="left:1091px;top:193px;width:1px;height:29px;background:#dedede;"></div>
<div class="a" style="left:1143.5px;top:193px;width:1px;height:29px;background:#dedede;"></div>
<div class="a" style="left:1196px;top:193px;width:1px;height:29px;background:#dedede;"></div>
<div class="a" style="left:1248.5px;top:193px;width:1px;height:29px;background:#dedede;"></div>
<div class="a" style="left:1301px;top:193px;width:1px;height:29px;background:#dedede;"></div>
<div class="a" style="left:1353.5px;top:193px;width:1px;height:29px;background:#dedede;"></div>
<div class="a" style="left:1406px;top:193px;width:1px;height:29px;background:#dedede;"></div>
<div class="a" style="left:1458.5px;top:193px;width:1px;height:29px;background:#dedede;"></div>
<div class="a" style="left:1511px;top:193px;width:1px;height:29px;background:#dedede;"></div>
<div class="a" style="left:1563.5px;top:193px;width:1px;height:29px;background:#dedede;"></div>
<div class="a" style="left:1616px;top:193px;width:1px;height:29px;background:#dedede;"></div>
<svg class="a" style="left:844px;top:197px;" width="22" height="22" viewBox="0 0 22 22"><path d="M0.5 0.5 L4.5 0.5 L4.5 8 L15.5 8 L15.5 0.5 L21 0.5 L21 21 L0.5 21 Z" fill="#34558f"/><rect x="12.5" y="0.5" width="2" height="5" fill="#34558f"/></svg>
<svg class="a" style="left:897px;top:197px;" width="23" height="23" viewBox="0 0 23 23"><circle cx="9" cy="9" r="7.3" fill="none" stroke="#34558f" stroke-width="2.4"/><path d="M9 4.5 L9 13.5 M4.5 9 L13.5 9" stroke="#34558f" stroke-width="1.8"/><line x1="14.5" y1="14.5" x2="19.5" y2="19.5" stroke="#34558f" stroke-width="3.6" stroke-linecap="round"/></svg>
<svg class="a" style="left:949px;top:197px;" width="23" height="23" viewBox="0 0 23 23"><circle cx="9" cy="9" r="7.3" fill="none" stroke="#34558f" stroke-width="2.4"/><path d="M4.5 9 L13.5 9" stroke="#34558f" stroke-width="2.2"/><line x1="14.5" y1="14.5" x2="19.5" y2="19.5" stroke="#34558f" stroke-width="3.6" stroke-linecap="round"/></svg>
<svg class="a" style="left:1001px;top:196px;" width="23" height="23" viewBox="0 0 23 23"><path d="M0.5 0.5 L8 0.5 L0.5 8 Z M22 0.5 L14.5 0.5 L22 8 Z M0.5 22 L8 22 L0.5 14.5 Z M22 22 L14.5 22 L22 14.5 Z" fill="#34558f"/><path d="M3 3 L8.5 8.5 M19.5 3 L14 8.5 M3 19.5 L8.5 14 M19.5 19.5 L14 14" stroke="#34558f" stroke-width="2.8"/></svg>
<svg class="a" style="left:1054px;top:197px;" width="22" height="22" viewBox="0 0 22 22"><path d="M3 1 L15 12.5 L10.5 13 L14 19.5 L11.5 20.5 L8 14 L5 17 Z" fill="#e8eef8" stroke="#34558f" stroke-width="1.4" stroke-linejoin="round"/><line x1="1.5" y1="20" x2="19.5" y2="1.5" stroke="#555" stroke-width="3"/></svg>
<svg class="a" style="left:1106px;top:196px;" width="24" height="23" viewBox="0 0 24 23"><path d="M1 8.5 L6 8.5 L6 5.5 L12 11 L6 16.5 L6 13.5 L1 13.5 Z" fill="#34558f"/><path d="M13 22 L13 1 L22 1 L22 4 L16 4 L16 22 Z" fill="#e8cf6a"/></svg>
<svg class="a" style="left:1160px;top:196px;" width="20" height="23" viewBox="0 0 20 23"><rect x="0.5" y="1" width="5" height="21" fill="#34558f"/><path d="M18.5 1 L7.5 11.5 L18.5 22 Z" fill="#34558f"/></svg>
<svg class="a" style="left:1213px;top:196px;" width="20" height="23" viewBox="0 0 20 23"><path d="M0.5 1 L11.5 11.5 L0.5 22 Z" fill="#34558f"/><rect x="14" y="1" width="5" height="21" fill="#34558f"/></svg>
<svg class="a" style="left:1264px;top:197px;" width="23" height="20" viewBox="0 0 23 20"><path d="M0 9.5 L6 9.5 L6 17 L21.5 17" fill="none" stroke="#3fb54a" stroke-width="2.6"/><path d="M10 6 L15.5 1 L15.5 3.5 L21.5 3.5 L21.5 8.5 L15.5 8.5 L15.5 11 Z" fill="#34558f"/></svg>
<svg class="a" style="left:1316px;top:197px;" width="23" height="20" viewBox="0 0 23 20"><path d="M0.5 17 L16 17 L16 9.5 L22 9.5" fill="none" stroke="#3fb54a" stroke-width="2.6"/><path d="M12 6 L6.5 1 L6.5 3.5 L0.5 3.5 L0.5 8.5 L6.5 8.5 L6.5 11 Z" fill="#34558f"/></svg>
<svg class="a" style="left:1369px;top:196px;" width="23" height="23" viewBox="0 0 23 23"><path d="M0.5 11 L11 11 M5.7 5.5 L5.7 16.5" stroke="#3fb54a" stroke-width="2.6"/><path d="M12.5 22 L12.5 1 L21.5 1 L21.5 4 L15.5 4 L15.5 22 Z" fill="#2f7ab8"/></svg>
<svg class="a" style="left:1422px;top:196px;" width="22" height="23" viewBox="0 0 22 23"><path d="M0.5 22 L0.5 1 L9 1 L9 4 L3.5 4 L3.5 22 Z" fill="#c4c4c4"/><path d="M7 14.5 L12 10 L12 12.5 L20 12.5 L20 16.5 L12 16.5 L12 19 Z" fill="#c4c4c4"/></svg>
<svg class="a" style="left:1474px;top:196px;" width="22" height="23" viewBox="0 0 22 23"><path d="M13.5 22 L13.5 1 L21.5 1 L21.5 4 L16.5 4 L16.5 22 Z" fill="#c4c4c4"/><path d="M12.5 14.5 L7.5 10 L7.5 12.5 L0 12.5 L0 16.5 L7.5 16.5 L7.5 19 Z" fill="#c4c4c4"/></svg>
<svg class="a" style="left:1526px;top:196px;" width="23" height="23" viewBox="0 0 23 23"><rect x="0.5" y="9.5" width="10.5" height="3" fill="#c4c4c4"/><path d="M12.5 22 L12.5 1 L21.5 1 L21.5 4 L15.5 4 L15.5 22 Z" fill="#c4c4c4"/></svg>
<svg class="a" style="left:1579px;top:197px;" width="23" height="21" viewBox="0 0 23 21"><rect x="1" y="1.5" width="3.3" height="17.5" fill="none" stroke="#c4c4c4" stroke-width="1.2"/><rect x="17.3" y="1.5" width="4.3" height="17.5" fill="#c4c4c4"/><path d="M5 12 L17 12" stroke="#c4c4c4" stroke-width="1.3"/><path d="M5 12 L8.5 9 L8.5 15 Z M17 12 L13.5 9 L13.5 15 Z" fill="#c4c4c4"/></svg>
<svg class="a" style="left:1764px;top:196px;" width="24" height="24" viewBox="0 0 24 24"><circle cx="11.5" cy="11.5" r="7.99" fill="#34558f"/><rect x="9.34" y="0.70" width="4.32" height="10.80" fill="#34558f" transform="rotate(0 11.5 11.5)"/><rect x="9.34" y="0.70" width="4.32" height="10.80" fill="#34558f" transform="rotate(45 11.5 11.5)"/><rect x="9.34" y="0.70" width="4.32" height="10.80" fill="#34558f" transform="rotate(90 11.5 11.5)"/><rect x="9.34" y="0.70" width="4.32" height="10.80" fill="#34558f" transform="rotate(135 11.5 11.5)"/><rect x="9.34" y="0.70" width="4.32" height="10.80" fill="#34558f" transform="rotate(180 11.5 11.5)"/><rect x="9.34" y="0.70" width="4.32" height="10.80" fill="#34558f" transform="rotate(225 11.5 11.5)"/><rect x="9.34" y="0.70" width="4.32" height="10.80" fill="#34558f" transform="rotate(270 11.5 11.5)"/><rect x="9.34" y="0.70" width="4.32" height="10.80" fill="#34558f" transform="rotate(315 11.5 11.5)"/><circle cx="11.5" cy="11.5" r="3.24" fill="#fff"/></svg>
<div class="a" style="left:777px;top:234.5px;width:594px;height:40.5px;background:#000;"></div>
<div class="a" style="left:777px;top:275px;width:414px;height:43px;background:linear-gradient(#f5f5f5,#e3e3e3);"></div>
<div class="a" style="left:1190px;top:275px;width:1px;height:43px;background:#c8c8c8;"></div>
<div class="a" style="left:1191px;top:275px;width:6.5px;height:321px;background:#fff;"></div>
<div class="a" style="left:1197.5px;top:275px;width:173.5px;height:43px;background:linear-gradient(#f5f5f5,#e3e3e3);"></div>
<div class="a" style="left:1370px;top:275px;width:1px;height:43px;background:#c8c8c8;"></div>
<div class="a t" style="left:799.80px;top:287.82px;font-size:19px;line-height:19px;color:#111;font-weight:bold;letter-spacing:2.306px;font-family:'Liberation Sans', sans-serif;">Name</div>
<div class="a t" style="left:1219.80px;top:287.82px;font-size:19px;line-height:19px;color:#111;font-weight:bold;letter-spacing:2.381px;font-family:'Liberation Sans', sans-serif;">Value</div>
<div class="a" style="left:777px;top:318px;width:414px;height:278px;background:#000;"></div>
<div class="a" style="left:1197.5px;top:318px;width:173.5px;height:257px;background:#000;"></div>
<div class="a" style="left:1371px;top:234.5px;width:6px;height:361.5px;background:#fff;"></div>
<div class="a" style="left:1377px;top:234.5px;width:403.5px;height:340.5px;background:#000;"></div>
<div class="a" style="left:1197.5px;top:575px;width:173.5px;height:21px;background:#f8f8f8;"></div>
<div class="a" style="left:1197.5px;top:575px;width:173.5px;height:1px;background:#e6e6e6;"></div>
<svg class="a" style="left:1205.5px;top:579px;" width="12" height="16" viewBox="0 0 12 16"><path d="M9 1.5 L2.5 7.5 L9 13.5" fill="none" stroke="#6e6e6e" stroke-width="2.4"/></svg>
<svg class="a" style="left:1354px;top:579px;" width="12" height="16" viewBox="0 0 12 16"><path d="M2.5 1.5 L9 7.5 L2.5 13.5" fill="none" stroke="#6e6e6e" stroke-width="2.4"/></svg>
<div class="a" style="left:1377px;top:575px;width:425px;height:21px;background:#f8f8f8;"></div>
<div class="a" style="left:1377px;top:575px;width:425px;height:1px;background:#e6e6e6;"></div>
<svg class="a" style="left:1385px;top:579px;" width="12" height="16" viewBox="0 0 12 16"><path d="M9 1.5 L2.5 7.5 L9 13.5" fill="none" stroke="#6e6e6e" stroke-width="2.4"/></svg>
<svg class="a" style="left:1785px;top:579px;" width="12" height="16" viewBox="0 0 12 16"><path d="M2.5 1.5 L9 7.5 L2.5 13.5" fill="none" stroke="#6e6e6e" stroke-width="2.4"/></svg>
<div class="a" style="left:1780.5px;top:234.5px;width:21.5px;height:340.5px;background:#f8f8f8;"></div>
<svg class="a" style="left:1785px;top:242px;" width="16" height="11" viewBox="0 0 16 11"><path d="M1 9 L8.0 1.5 L15 9" fill="none" stroke="#6e6e6e" stroke-width="2.2"/></svg>
<div class="a" style="left:1785.5px;top:261px;width:11.5px;height:204px;background:#bdbdbd;border-radius:6px;"></div>
<svg class="a" style="left:1785px;top:560px;" width="16" height="11" viewBox="0 0 16 11"><path d="M1.5 1.5 L8 8 L14.5 1.5" fill="none" stroke="#6e6e6e" stroke-width="2.2"/></svg>
<svg class="a" style="left:791.5px;top:329.0px;" width="10" height="15" viewBox="0 0 10 15"><path d="M1.5 1.5 L8 7.5 L1.5 13.5" fill="none" stroke="#8a8a8a" stroke-width="1.7"/></svg>
<svg class="a" style="left:811px;top:326.5px;" width="19" height="19" viewBox="0 0 19 19"><rect x="1" y="0.5" width="2" height="2" fill="#555"/><rect x="15.5" y="0.5" width="2" height="2" fill="#555"/><rect x="1" y="15.5" width="2" height="2" fill="#555"/><rect x="15.5" y="15.5" width="2" height="2" fill="#555"/><rect x="1.8" y="2.5" width="11" height="9.5" fill="#9cc4da" stroke="#3a5a88" stroke-width="0.8"/><rect x="5.5" y="6.8" width="11.5" height="10" fill="#9cc4da" stroke="#3a5a88" stroke-width="0.8"/></svg>
<div class="a t" style="left:836.60px;top:326.72px;font-size:19px;line-height:19px;color:#f0f0f0;font-weight:normal;letter-spacing:-1.691px;font-family:'Liberation Sans', sans-serif;">CIPS</div>
<svg class="a" style="left:791.5px;top:362.0px;" width="10" height="15" viewBox="0 0 10 15"><path d="M1.5 1.5 L8 7.5 L1.5 13.5" fill="none" stroke="#8a8a8a" stroke-width="1.7"/></svg>
<svg class="a" style="left:811px;top:359.5px;" width="19" height="19" viewBox="0 0 19 19"><rect x="1" y="0.5" width="2" height="2" fill="#555"/><rect x="15.5" y="0.5" width="2" height="2" fill="#555"/><rect x="1" y="15.5" width="2" height="2" fill="#555"/><rect x="15.5" y="15.5" width="2" height="2" fill="#555"/><rect x="1.8" y="2.5" width="11" height="9.5" fill="#9cc4da" stroke="#3a5a88" stroke-width="0.8"/><rect x="5.5" y="6.8" width="11.5" height="10" fill="#9cc4da" stroke="#3a5a88" stroke-width="0.8"/></svg>
<div class="a t" style="left:835.60px;top:359.72px;font-size:19px;line-height:19px;color:#f0f0f0;font-weight:normal;letter-spacing:-0.788px;font-family:'Liberation Sans', sans-serif;">NOISE</div>
<svg class="a" style="left:791.5px;top:395.0px;" width="10" height="15" viewBox="0 0 10 15"><path d="M1.5 1.5 L8 7.5 L1.5 13.5" fill="none" stroke="#8a8a8a" stroke-width="1.7"/></svg>
<svg class="a" style="left:811px;top:392.5px;" width="19" height="19" viewBox="0 0 19 19"><rect x="1" y="0.5" width="2" height="2" fill="#555"/><rect x="15.5" y="0.5" width="2" height="2" fill="#555"/><rect x="1" y="15.5" width="2" height="2" fill="#555"/><rect x="15.5" y="15.5" width="2" height="2" fill="#555"/><rect x="1.8" y="2.5" width="11" height="9.5" fill="#9cc4da" stroke="#3a5a88" stroke-width="0.8"/><rect x="5.5" y="6.8" width="11.5" height="10" fill="#9cc4da" stroke="#3a5a88" stroke-width="0.8"/></svg>
<div class="a t" style="left:836.60px;top:392.72px;font-size:19px;line-height:19px;color:#f0f0f0;font-weight:normal;letter-spacing:-0.256px;font-family:'Liberation Sans', sans-serif;">S2MM</div>
<svg class="a" style="left:791.5px;top:428.0px;" width="10" height="15" viewBox="0 0 10 15"><path d="M1.5 1.5 L8 7.5 L1.5 13.5" fill="none" stroke="#8a8a8a" stroke-width="1.7"/></svg>
<svg class="a" style="left:811px;top:425.5px;" width="19" height="19" viewBox="0 0 19 19"><rect x="1" y="0.5" width="2" height="2" fill="#555"/><rect x="15.5" y="0.5" width="2" height="2" fill="#555"/><rect x="1" y="15.5" width="2" height="2" fill="#555"/><rect x="15.5" y="15.5" width="2" height="2" fill="#555"/><rect x="1.8" y="2.5" width="11" height="9.5" fill="#9cc4da" stroke="#3a5a88" stroke-width="0.8"/><rect x="5.5" y="6.8" width="11.5" height="10" fill="#9cc4da" stroke="#3a5a88" stroke-width="0.8"/></svg>
<div class="a t" style="left:836.60px;top:425.72px;font-size:19px;line-height:19px;color:#f0f0f0;font-weight:normal;letter-spacing:-1.402px;font-family:'Liberation Sans', sans-serif;">CIPS_NOC</div>
<svg class="a" style="left:791.5px;top:461.0px;" width="10" height="15" viewBox="0 0 10 15"><path d="M1.5 1.5 L8 7.5 L1.5 13.5" fill="none" stroke="#8a8a8a" stroke-width="1.7"/></svg>
<svg class="a" style="left:811px;top:458.5px;" width="19" height="19" viewBox="0 0 19 19"><rect x="1" y="0.5" width="2" height="2" fill="#555"/><rect x="15.5" y="0.5" width="2" height="2" fill="#555"/><rect x="1" y="15.5" width="2" height="2" fill="#555"/><rect x="15.5" y="15.5" width="2" height="2" fill="#555"/><rect x="1.8" y="2.5" width="11" height="9.5" fill="#9cc4da" stroke="#3a5a88" stroke-width="0.8"/><rect x="5.5" y="6.8" width="11.5" height="10" fill="#9cc4da" stroke="#3a5a88" stroke-width="0.8"/></svg>
<div class="a t" style="left:835.60px;top:458.72px;font-size:19px;line-height:19px;color:#f0f0f0;font-weight:normal;letter-spacing:-0.855px;font-family:'Liberation Sans', sans-serif;">DDR4</div>
<svg class="a" style="left:791.5px;top:494.0px;" width="10" height="15" viewBox="0 0 10 15"><path d="M1.5 1.5 L8 7.5 L1.5 13.5" fill="none" stroke="#8a8a8a" stroke-width="1.7"/></svg>
<svg class="a" style="left:811px;top:491.5px;" width="19" height="19" viewBox="0 0 19 19"><rect x="1" y="0.5" width="2" height="2" fill="#555"/><rect x="15.5" y="0.5" width="2" height="2" fill="#555"/><rect x="1" y="15.5" width="2" height="2" fill="#555"/><rect x="15.5" y="15.5" width="2" height="2" fill="#555"/><rect x="1.8" y="2.5" width="11" height="9.5" fill="#9cc4da" stroke="#3a5a88" stroke-width="0.8"/><rect x="5.5" y="6.8" width="11.5" height="10" fill="#9cc4da" stroke="#3a5a88" stroke-width="0.8"/></svg>
<div class="a t" style="left:836.60px;top:491.72px;font-size:19px;line-height:19px;color:#f0f0f0;font-weight:normal;letter-spacing:-0.946px;font-family:'Liberation Sans', sans-serif;">AIENGINE</div>
<div class="a" style="left:777px;top:515px;width:414px;height:2px;background:#c8c8c8;"></div>
<div class="a" style="left:1197.5px;top:515px;width:173.5px;height:2px;background:#c8c8c8;"></div>
<div class="a" style="left:1382px;top:294.5px;width:1.5px;height:221px;background:#b4b4b4;"></div>
<div class="a" style="left:1412px;top:312.5px;width:1.5px;height:7px;background:#d8d8d8;"></div>
<div class="a" style="left:1442px;top:312.5px;width:1.5px;height:7px;background:#d8d8d8;"></div>
<div class="a" style="left:1472px;top:312.5px;width:1.5px;height:7px;background:#d8d8d8;"></div>
<div class="a" style="left:1502px;top:312.5px;width:1.5px;height:7px;background:#d8d8d8;"></div>
<div class="a" style="left:1532px;top:294.5px;width:1.5px;height:221px;background:#b4b4b4;"></div>
<div class="a" style="left:1562px;top:312.5px;width:1.5px;height:7px;background:#d8d8d8;"></div>
<div class="a" style="left:1592px;top:312.5px;width:1.5px;height:7px;background:#d8d8d8;"></div>
<div class="a" style="left:1622px;top:312.5px;width:1.5px;height:7px;background:#d8d8d8;"></div>
<div class="a" style="left:1652px;top:312.5px;width:1.5px;height:7px;background:#d8d8d8;"></div>
<div class="a" style="left:1682px;top:294.5px;width:1.5px;height:221px;background:#b4b4b4;"></div>
<div class="a" style="left:1712px;top:312.5px;width:1.5px;height:7px;background:#d8d8d8;"></div>
<div class="a" style="left:1742px;top:312.5px;width:1.5px;height:7px;background:#d8d8d8;"></div>
<div class="a" style="left:1772px;top:312.5px;width:1.5px;height:7px;background:#d8d8d8;"></div>
<div class="a" style="left:1382px;top:318.5px;width:396px;height:2px;background:#d8d8d8;"></div>
<div class="a" style="left:1382px;top:515px;width:396px;height:2px;background:#c8c8c8;"></div>
<div class="a t" style="left:1385.50px;top:290.37px;font-size:17px;line-height:17px;color:#dcdcdc;font-weight:normal;letter-spacing:0.160px;font-family:'Liberation Mono', monospace;">0 ps</div>
<div class="a t" style="left:1535.50px;top:290.37px;font-size:17px;line-height:17px;color:#dcdcdc;font-weight:normal;letter-spacing:0.160px;font-family:'Liberation Mono', monospace;">500 ps</div>
<div class="a t" style="left:1685.00px;top:290.37px;font-size:17px;line-height:17px;color:#dcdcdc;font-weight:normal;letter-spacing:0.160px;font-family:'Liberation Mono', monospace;">1,000 ps</div>
<div class="a" style="left:1681px;top:234.5px;width:90px;height:23px;background:#ffff00;"></div>
<div class="a t" style="left:1684.00px;top:238.17px;font-size:17px;line-height:17px;color:#000;font-weight:normal;letter-spacing:0.160px;font-family:'Liberation Mono', monospace;">1,000 ps</div>
<div class="a" style="left:1681px;top:257px;width:2.5px;height:260px;background:#ffff00;"></div>
<div class="a" style="left:6px;top:620.5px;width:1800.5px;height:342px;background:#dadada;"></div>
<div class="a" style="left:7px;top:621.5px;width:1798.5px;height:341px;background:#e4e4e4;"></div>
<div class="a" style="left:10.5px;top:625px;width:1791px;height:337px;background:#fff;"></div>
<div class="a" style="left:193.5px;top:625px;width:1608px;height:40px;background:#ececec;"></div>
<div class="a t" style="left:19.80px;top:634.82px;font-size:19px;line-height:19px;color:#111;font-weight:bold;letter-spacing:1.289px;font-family:'Liberation Sans', sans-serif;">Tcl Console</div>
<svg class="a" style="left:171px;top:640px;" width="14" height="14" viewBox="0 0 14 14"><path d="M1.5 1.5 L12.5 12.5 M12.5 1.5 L1.5 12.5" stroke="#888" stroke-width="1.6"/></svg>
<div class="a t" style="left:202.20px;top:634.82px;font-size:19px;line-height:19px;color:#9a9a9a;font-weight:bold;letter-spacing:2.447px;font-family:'Liberation Sans', sans-serif;">Messages</div>
<div class="a" style="left:333.5px;top:625px;width:1.5px;height:34px;background:#cacaca;"></div>
<div class="a t" style="left:1684.00px;top:635.09px;font-size:19.5px;line-height:19.5px;color:#868686;font-weight:bold;letter-spacing:1.500px;font-family:'Liberation Sans', sans-serif;">?</div>
<div class="a" style="left:1712px;top:648px;width:15px;height:3px;background:#868686;"></div>
<svg class="a" style="left:1742px;top:636px;" width="16" height="16" viewBox="0 0 16 16"><rect x="1.5" y="1.5" width="12.5" height="12.5" fill="none" stroke="#868686" stroke-width="2.8"/></svg>
<svg class="a" style="left:1772px;top:636px;" width="16" height="16" viewBox="0 0 16 16"><path d="M7 1.5 L1.5 1.5 L1.5 14 L14 14 L14 8" fill="none" stroke="#868686" stroke-width="2.8"/><path d="M8 8 L14.5 1.5" stroke="#868686" stroke-width="1.8"/><path d="M10 1 L15 1 L15 6 Z" fill="#868686"/></svg>
<svg class="a" style="left:25px;top:678px;" width="22" height="22" viewBox="0 0 22 22"><circle cx="9.6" cy="9.6" r="8" fill="none" stroke="#34558f" stroke-width="2.5"/><line x1="15.8" y1="15.8" x2="19" y2="19.2" stroke="#34558f" stroke-width="3.6" stroke-linecap="round"/></svg>
<div class="a" style="left:62px;top:674px;width:1px;height:29px;background:#dedede;"></div>
<div class="a" style="left:114.5px;top:674px;width:1px;height:29px;background:#dedede;"></div>
<div class="a" style="left:167px;top:674px;width:1px;height:29px;background:#dedede;"></div>
<div class="a" style="left:219.5px;top:674px;width:1px;height:29px;background:#dedede;"></div>
<div class="a" style="left:272px;top:674px;width:1px;height:29px;background:#dedede;"></div>
<div class="a" style="left:324.5px;top:674px;width:1px;height:29px;background:#dedede;"></div>
<div class="a" style="left:376.5px;top:674px;width:1px;height:29px;background:#dedede;"></div>
<svg class="a" style="left:79px;top:678px;" width="18" height="22" viewBox="0 0 18 22"><path d="M1 0 L17 0 L9 6.5 Z" fill="#34558f"/><rect x="0" y="9.5" width="18" height="2.5" fill="#34558f"/><path d="M1 21 L17 21 L9 14.5 Z" fill="#34558f"/></svg>
<svg class="a" style="left:132px;top:678px;" width="18" height="22" viewBox="0 0 18 22"><path d="M1 7 L17 7 L9 0 Z" fill="#34558f"/><rect x="0" y="9.5" width="18" height="2.5" fill="#34558f"/><path d="M1 14.5 L17 14.5 L9 21.5 Z" fill="#34558f"/></svg>
<svg class="a" style="left:186px;top:678px;" width="16" height="22" viewBox="0 0 16 22"><rect x="0.5" y="0.5" width="4.5" height="20.5" fill="#34558f"/><rect x="9.5" y="0.5" width="4.5" height="20.5" fill="#34558f"/></svg>
<svg class="a" style="left:236px;top:678px;" width="20" height="22" viewBox="0 0 20 22"><path d="M0.5 1 L14 1 L14 3.5 L3 3.5 L3 17 L0.5 17 Z" fill="#34558f"/><rect x="4.3" y="4.8" width="14" height="16" fill="#fff" stroke="#34558f" stroke-width="2"/><path d="M7 10 L15.5 10 M7 13 L15.5 13 M7 16 L15.5 16" stroke="#34558f" stroke-width="1.3"/></svg>
<svg class="a" style="left:287px;top:678px;" width="22" height="22" viewBox="0 0 22 22"><rect x="1" y="1" width="20" height="20" fill="#fff" stroke="#34558f" stroke-width="1.8"/><rect x="7" y="1" width="8" height="20" fill="#5a7fc4"/><path d="M1 5.5 L7 5.5 M1 10 L7 10 M1 14.5 L7 14.5 M15 5.5 L21 5.5 M15 10 L21 10 M15 14.5 L21 14.5" stroke="#34558f" stroke-width="1.4"/></svg>
<svg class="a" style="left:341px;top:678px;" width="20" height="22" viewBox="0 0 20 22"><rect x="0.5" y="2" width="18" height="3" fill="#34558f"/><rect x="6" y="0" width="7" height="2.5" fill="#34558f"/><rect x="2" y="6" width="15" height="15.5" fill="#34558f"/><rect x="6" y="9" width="2" height="10" fill="#fff"/><rect x="11" y="9" width="2" height="10" fill="#fff"/></svg>
<div class="a" style="left:10.5px;top:713px;width:1791px;height:2.5px;background:#e6e6e6;"></div>
<svg class="a" style="left:27px;top:715.5px;" width="4" height="180" viewBox="0 0 4 180"><line x1="2" y1="0" x2="2" y2="178" stroke="#8a8a8a" stroke-width="1.3" stroke-dasharray="5,5"/></svg>
<svg class="a" style="left:20px;top:852px;" width="18" height="22" viewBox="0 0 18 22"><path d="M1 7.5 L8.5 1 L16 7.5 L16 20 L1 20 Z" fill="#fff" stroke="#a8a8a8" stroke-width="1.3"/><path d="M4.5 12.5 L12.5 12.5" stroke="#a0a0a0" stroke-width="1.3"/></svg>
<div class="a" style="left:40px;top:714.5px;width:1726px;height:181px;overflow:hidden;">
<div class="a t" style="left:8.5px;top:5.37px;font-family:'Liberation Mono', monospace;font-size:17px;line-height:17px;color:#1a1a1a;letter-spacing:0.315px;"># set ddr4_intf [get_objects -r $scope_path/noc_ddr4/* -filter {type==proto_inst}]</div>
<div class="a t" style="left:8.5px;top:27.87px;font-family:'Liberation Mono', monospace;font-size:17px;line-height:17px;color:#1a1a1a;letter-spacing:0.315px;"># add_wave -into $DDR4 $ddr4_intf</div>
<div class="a t" style="left:8.5px;top:50.37px;font-family:'Liberation Mono', monospace;font-size:17px;line-height:17px;color:#1a1a1a;letter-spacing:0.315px;"># set AIENGINE [add_wave_group AIENGINE]</div>
<div class="a t" style="left:8.5px;top:72.87px;font-family:'Liberation Mono', monospace;font-size:17px;line-height:17px;color:#1a1a1a;letter-spacing:0.315px;">get_objects: Time (s): cpu = 00:00:10 ; elapsed = 00:00:10 . Memory (MB): peak = 14286.863 ; gain = 0.000 ; free physical = 24735 ; free virtual = 53929</div>
<div class="a t" style="left:8.5px;top:95.37px;font-family:'Liberation Mono', monospace;font-size:17px;line-height:17px;color:#1a1a1a;letter-spacing:0.315px;"># set aie_intf [get_objects -r $scope_path/ai_engine_0/* -filter {type==proto_inst}]</div>
<div class="a t" style="left:8.5px;top:117.87px;font-family:'Liberation Mono', monospace;font-size:17px;line-height:17px;color:#1a1a1a;letter-spacing:0.315px;"># add_wave -into $AIENGINE $aie_intf</div>
<div class="a t" style="left:8.5px;top:140.37px;font-family:'Liberation Mono', monospace;font-size:17px;line-height:17px;color:#1a1a1a;letter-spacing:0.315px;">/vitis_design_wrapper_sim_wrapper/vitis_design_wrapper_i/vitis_design_i/ai_engine_0/vitis_design_ai_engine_0_0_S00_AXI_tlm /vitis_design_wrapper_sim_wrapper/vitis_design_wrapper_i/vitis_design_i</div>
</div>
<div class="a" style="left:1766px;top:714.5px;width:19px;height:182px;background:#f8f8f8;"></div>
<svg class="a" style="left:1769px;top:723px;" width="15" height="11" viewBox="0 0 15 11"><path d="M1 9 L7.5 1.5 L14 9" fill="none" stroke="#6e6e6e" stroke-width="2.2"/></svg>
<div class="a" style="left:1771px;top:820px;width:10.5px;height:51px;background:#bdbdbd;border-radius:6px;"></div>
<svg class="a" style="left:1769px;top:882px;" width="16" height="11" viewBox="0 0 16 11"><path d="M1.5 1.5 L7.5 8 L13.5 1.5" fill="none" stroke="#6e6e6e" stroke-width="2.2"/></svg>
<div class="a" style="left:1786px;top:733px;width:13.5px;height:3.5px;background:#e5cf2c;"></div>
<div class="a" style="left:1786px;top:797px;width:13.5px;height:18px;background:#e5cf2c;"></div>
<div class="a" style="left:48px;top:896px;width:1718px;height:21px;background:#fbfbfb;"></div>
<div class="a" style="left:48px;top:896px;width:1718px;height:1px;background:#e6e6e6;"></div>
<svg class="a" style="left:56px;top:900px;" width="12" height="16" viewBox="0 0 12 16"><path d="M9 1.5 L2.5 7.5 L9 13.5" fill="none" stroke="#6e6e6e" stroke-width="2.4"/></svg>
<svg class="a" style="left:1749px;top:900px;" width="12" height="16" viewBox="0 0 12 16"><path d="M2.5 1.5 L9 7.5 L2.5 13.5" fill="none" stroke="#6e6e6e" stroke-width="2.4"/></svg>
<div class="a" style="left:73.5px;top:901px;width:284.5px;height:11px;background:#bdbdbd;border-radius:6px;"></div>
<div class="a" style="left:48px;top:916px;width:1718px;height:1px;background:#e6e6e6;"></div>
<div class="a" style="left:15.5px;top:923px;width:1781.5px;height:32px;background:#fff;box-sizing:border-box;border:1.5px solid #c4c4c4;"></div>
<div class="a t" style="left:26.00px;top:930.17px;font-size:17px;line-height:17px;color:#9a9a9a;font-weight:normal;letter-spacing:0.315px;font-family:'Liberation Mono', monospace;">Type a Tcl command here</div>
</body></html>
